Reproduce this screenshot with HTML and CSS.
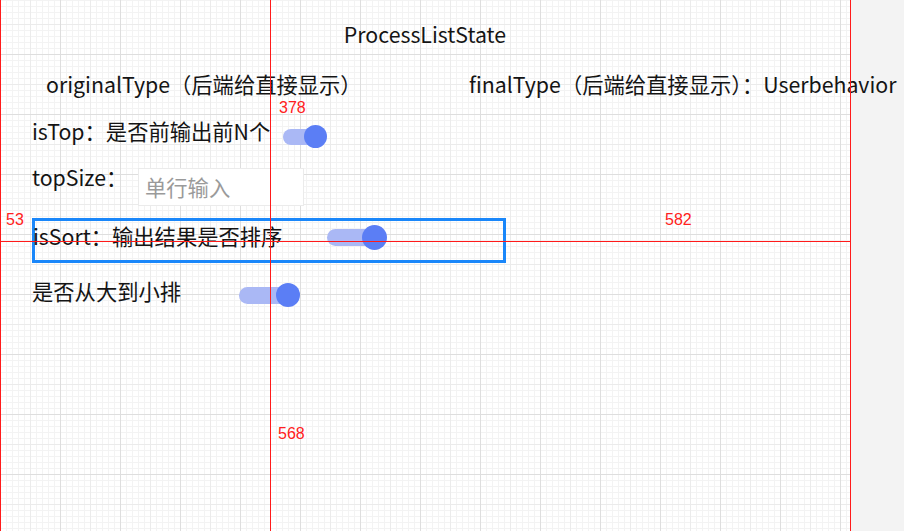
FILE: index.html
```html
<!DOCTYPE html>
<html lang="zh">
<head>
<meta charset="utf-8">
<title>ProcessListState</title>
<link rel="stylesheet" href="styles.css">
</head>
<body>
<div class="page">
  <div class="canvas">
    <div class="form">
      <div class="title">ProcessListState</div>
      <div class="types">
        <span class="type-a">originalType（后端给直接显示）</span>
        <span class="type-b">finalType（后端给直接显示）：Userbehavior</span>
      </div>
      <div class="row row-top">
        <span class="lbl lbl-top">isTop：是否前输出前N个</span>
        <span class="switch sw-44"><span class="track"></span><span class="knob"></span></span>
      </div>
      <div class="row row-size">
        <span class="lbl lbl-size">topSize：</span>
        <span class="input">单行输入</span>
      </div>
      <div class="row row-sort selected">
        <span class="lbl lbl-sort">isSort：输出结果是否排序</span>
        <span class="switch sw-60"><span class="track"></span><span class="knob"></span></span>
      </div>
      <div class="row row-order">
        <span class="lbl lbl-order">是否从大到小排</span>
        <span class="switch sw-61"><span class="track"></span><span class="knob"></span></span>
      </div>
    </div>
    <div class="guide v-left"></div>
    <div class="guide v-mid"></div>
    <div class="guide v-right"></div>
    <div class="guide h-mid"></div>
    <span class="mark m-378">378</span>
    <span class="mark m-53">53</span>
    <span class="mark m-582">582</span>
    <span class="mark m-568">568</span>
  </div>
</div>
</body>
</html>
```

FILE: styles.css
```css
html, body {
  margin: 0;
  padding: 0;
  background: #f3f3f3;
}
.page {
  width: 904px;
  height: 531px;
  overflow: hidden;
}
.canvas {
  position: relative;
  width: 850px;
  height: 531px;
  background-color: #ffffff;
  background-image:
    linear-gradient(to right, #dedede 1px, transparent 1px),
    linear-gradient(to bottom, #dedede 1px, transparent 1px),
    linear-gradient(to right, #ebebeb 1px, transparent 1px),
    linear-gradient(to bottom, #ebebeb 1px, transparent 1px),
    linear-gradient(to right, #f3f3f3 1px, transparent 1px),
    linear-gradient(to bottom, #f3f3f3 1px, transparent 1px);
  background-size: 60px 60px, 60px 60px, 30px 30px, 30px 30px, 6px 6px, 6px 6px;
  background-position: 0 0, 0 54px, 0 0, 0 24px, 0 0, 0 0;
  font-family: "Noto Sans CJK SC", "Noto Sans", sans-serif;
  font-size: 21.3px;
  color: #141414;
}
.form {
  display: flex;
  flex-direction: column;
  width: 850px;
}
.title {
  margin-top: 19px;
  height: 30px;
  line-height: 30px;
  text-align: center;
}
.types {
  margin-top: 20px;
  height: 30px;
  line-height: 30px;
  display: flex;
  white-space: nowrap;
}
.type-a {
  width: 423px;
  flex: none;
  padding-left: 46px;
}
.type-b {
  flex: none;
}
.row {
  display: flex;
  align-items: flex-start;
  padding-left: 32px;
  white-space: nowrap;
}
.lbl {
  flex: none;
  height: 30px;
  line-height: 30px;
}
.row-top { margin-top: 17px; height: 32px; }
.lbl-top { width: 251px; }
.row-top .switch { margin-top: 9px; }

.row-size { margin-top: 14px; height: 44px; }
.lbl-size { width: 106px; }
.input {
  margin-top: 6px;
  box-sizing: border-box;
  width: 166px;
  height: 38px;
  line-height: 36px;
  border: 1px solid #ebebeb;
  background: #fff;
  color: #9a9a9a;
  padding-left: 6px;
}

.row-sort.selected {
  margin-top: 12px;
  margin-left: 32px;
  padding-left: 0;
  box-sizing: border-box;
  width: 474px;
  height: 45px;
  border: 3px solid #1a87fa;
}
.lbl-sort { width: 294px; margin-left: -2px; }
.row-sort .switch { margin-top: 4px; }

.row-order { margin-top: 13px; }
.lbl-order { width: 207px; }
.row-order .switch { margin-top: 7px; }

.switch {
  position: relative;
  flex: none;
  display: block;
}
.switch .track {
  position: absolute;
  left: 0;
  border-radius: 9px;
  background: #aab8f5;
}
.switch .knob {
  position: absolute;
  right: 0;
  top: 0;
  border-radius: 50%;
  background: #5b7ef5;
}
.sw-44 { width: 44px; height: 23px; }
.sw-44 .track { top: 4px; width: 38px; height: 16px; }
.sw-44 .knob { width: 23px; height: 23px; }

.sw-60 { width: 60px; height: 25px; }
.sw-60 .track { top: 4px; width: 50px; height: 17px; }
.sw-60 .knob { width: 25px; height: 25px; }

.sw-61 { width: 61px; height: 24px; }
.sw-61 .track { top: 4px; width: 50px; height: 17px; }
.sw-61 .knob { width: 24px; height: 24px; }

.guide {
  position: absolute;
  background: #ff1a1a;
}
.v-left { left: 0; top: 0; width: 1px; height: 531px; }
.v-mid { left: 270px; top: 0; width: 1px; height: 531px; }
.v-right { left: 850px; top: 0; width: 1px; height: 531px; }
.h-mid { left: 0; top: 241px; width: 850px; height: 1px; }

.mark {
  position: absolute;
  font-family: "Liberation Sans", Arial, sans-serif;
  font-size: 16px;
  line-height: 18px;
  color: #ff2020;
}
.m-378 { left: 279px; top: 99px; }
.m-53 { left: 6px; top: 211px; }
.m-582 { left: 665px; top: 211px; }
.m-568 { left: 278px; top: 425px; }
```
